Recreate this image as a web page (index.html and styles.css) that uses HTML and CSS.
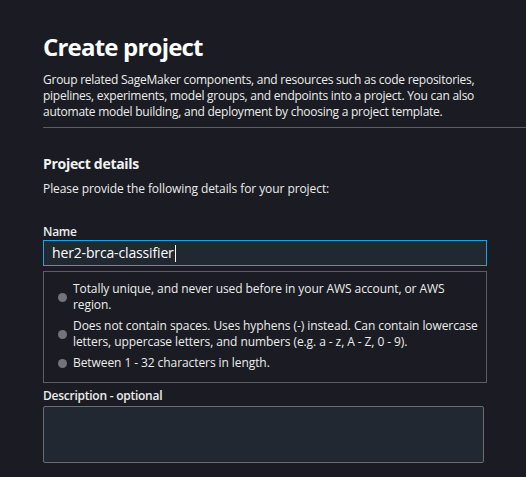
FILE: index.html
```html
<!DOCTYPE html>
<html lang="en">
<head>
<meta charset="utf-8">
<title>Create project</title>
<link rel="stylesheet" href="styles.css">
</head>
<body>
<main class="page">
  <header class="intro">
    <h1 class="title">Create project</h1>
    <p class="lead">Group related SageMaker components, and resources such as code repositories, pipelines, experiments, model groups, and endpoints into a project. You can also automate model building, and deployment by choosing a project template.</p>
  </header>
  <section class="details">
    <h2 class="section-title">Project details</h2>
    <p class="section-sub">Please provide the following details for your project:</p>

    <div class="field">
      <label class="label" for="name">Name</label>
      <div class="input input-focus"><span class="input-text">her2-brca-classifier</span><span class="caret"></span></div>
      <ul class="rules">
        <li class="rule"><span class="dot"></span><span class="rule-text">Totally unique, and never used before in your AWS account, or AWS region.</span></li>
        <li class="rule"><span class="dot"></span><span class="rule-text">Does not contain spaces. Uses hyphens (-) instead. Can contain lowercase letters, uppercase letters, and numbers (e.g. a - z, A - Z, 0 - 9).</span></li>
        <li class="rule"><span class="dot"></span><span class="rule-text">Between 1 - 32 characters in length.</span></li>
      </ul>
    </div>

    <div class="field field-desc">
      <label class="label" for="desc">Description - optional</label>
      <div class="textarea"></div>
    </div>
  </section>
</main>
</body>
</html>
```
FILE: styles.css
```css
* { box-sizing: border-box; }
html, body {
  margin: 0;
  padding: 0;
  background: #1b1c23;
  height: 100%;
}
body {
  font-family: "Open Sans", "Noto Sans", sans-serif;
  color: #ececec;
  font-size: 12px;
  line-height: 16px;
  font-weight: 500;
  letter-spacing: -0.25px;
}
.page {
  padding: 30px 0 0 43px;
}
.intro {
  border-bottom: 1px solid #5c5e63;
  padding-bottom: 7px;
}
.title {
  margin: 0;
  font-size: 24px;
  line-height: 34px;
  font-weight: 700;
  letter-spacing: -0.8px;
  color: #ffffff;
}
.lead {
  margin: 8px 0 0;
  width: 444px;
}
.details {
  padding-top: 26px;
}
.section-title {
  margin: 0;
  font-size: 14px;
  line-height: 20px;
  font-weight: 700;
  letter-spacing: -0.3px;
  color: #f2f2f2;
}
.section-sub {
  margin: 7px 0 0;
  letter-spacing: -0.08px;
}
.field {
  width: 444px;
  margin-top: 27px;
}
.field-desc {
  margin-top: 5px;
}
.label {
  display: block;
  line-height: 16px;
  font-weight: 600;
}
.input {
  display: flex;
  align-items: center;
  height: 26px;
  padding: 0 8px;
  background: #222832;
  border: 1px solid #5c5e63;
  font-size: 14px;
  letter-spacing: -0.15px;
}
.input-focus {
  border-color: #17a3e6;
}
.input-text {
  color: #ffffff;
}
.caret {
  width: 1px;
  height: 17px;
  background: #ffffff;
  margin-left: 1px;
}
.rules {
  list-style: none;
  margin: 5px 0 0;
  padding: 9px 8px 11px 14px;
  border: 1px solid #5c5e63;
  display: flex;
  flex-direction: column;
  gap: 5px;
  letter-spacing: -0.08px;
}
.rule {
  display: flex;
  align-items: center;
  gap: 6px;
}
.dot {
  flex: none;
  width: 9px;
  height: 9px;
  border-radius: 50%;
  background: #71747c;
}
.textarea {
  margin-top: 2px;
  height: 57px;
  width: 441px;
  background: #222832;
  border: 1px solid #6a6c70;
  border-radius: 2px;
}
```
